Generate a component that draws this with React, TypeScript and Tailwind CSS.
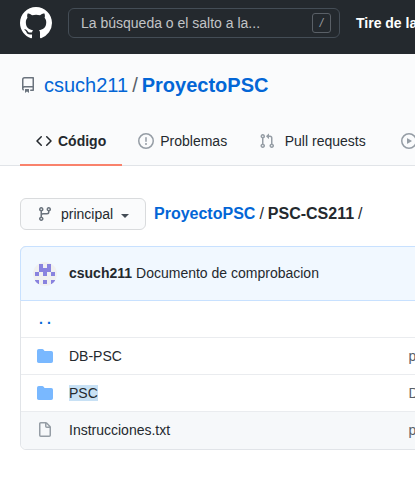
import type { ReactNode } from "react";

function Octicon({ d, className = "", size = 16 }: { d: string; className?: string; size?: number }) {
  return (
    <svg viewBox="0 0 16 16" width={size} height={size} className={`shrink-0 fill-current ${className}`} aria-hidden="true">
      <path fillRule="evenodd" d={d} />
    </svg>
  );
}

const icons = {
  mark: "M8 0C3.58 0 0 3.58 0 8c0 3.54 2.29 6.53 5.47 7.59.4.07.55-.17.55-.38 0-.19-.01-.82-.01-1.49-2.01.37-2.53-.49-2.69-.94-.09-.23-.48-.94-.82-1.13-.28-.15-.68-.52-.01-.53.63-.01 1.08.58 1.23.82.72 1.21 1.87.87 2.33.66.07-.52.28-.87.51-1.07-1.78-.2-3.64-.89-3.64-3.95 0-.87.31-1.59.82-2.15-.08-.2-.36-1.02.08-2.12 0 0 .67-.21 2.2.82.64-.18 1.32-.27 2-.27.68 0 1.36.09 2 .27 1.53-1.04 2.2-.82 2.2-.82.44 1.1.16 1.92.08 2.12.51.56.82 1.27.82 2.15 0 3.07-1.87 3.75-3.65 3.95.29.25.54.73.54 1.48 0 1.07-.01 1.93-.01 2.2 0 .21.15.46.55.38A8.013 8.013 0 0016 8c0-4.42-3.58-8-8-8z",
  repo: "M2 2.5A2.5 2.5 0 014.5 0h8.75a.75.75 0 01.75.75v12.5a.75.75 0 01-.75.75h-2.5a.75.75 0 110-1.5h1.75v-2h-8a1 1 0 00-.714 1.7.75.75 0 01-1.072 1.05A2.495 2.495 0 012 11.5v-9zm10.5-1V9h-8c-.356 0-.694.074-1 .208V2.5a1 1 0 011-1h8zM5 12.25v3.25a.25.25 0 00.4.2l1.45-1.087a.25.25 0 01.3 0L8.6 15.7a.25.25 0 00.4-.2v-3.25a.25.25 0 00-.25-.25h-3.5a.25.25 0 00-.25.25z",
  code: "M4.72 3.22a.75.75 0 011.06 1.06L2.06 8l3.72 3.72a.75.75 0 11-1.06 1.06L.47 8.53a.75.75 0 010-1.06l4.25-4.25zm6.56 0a.75.75 0 10-1.06 1.06L13.94 8l-3.72 3.72a.75.75 0 101.06 1.06l4.25-4.25a.75.75 0 000-1.06l-4.25-4.25z",
  issue: "M8 1.5a6.5 6.5 0 100 13 6.5 6.5 0 000-13zM0 8a8 8 0 1116 0A8 8 0 010 8zm9 3a1 1 0 11-2 0 1 1 0 012 0zm-.25-6.25a.75.75 0 00-1.5 0v3.5a.75.75 0 001.5 0v-3.5z",
  pull: "M7.177 3.073L9.573.677A.25.25 0 0110 .854v4.792a.25.25 0 01-.427.177L7.177 3.427a.25.25 0 010-.354zM3.75 2.5a.75.75 0 100 1.5.75.75 0 000-1.5zm-2.25.75a2.25 2.25 0 113 2.122v5.256a2.251 2.251 0 11-1.5 0V5.372A2.25 2.25 0 011.5 3.25zM11 2.5h-1V4h1a1 1 0 011 1v5.628a2.251 2.251 0 101.5 0V5A2.5 2.5 0 0011 2.5zm1 10.25a.75.75 0 111.5 0 .75.75 0 01-1.5 0zM3.75 12a.75.75 0 100 1.5.75.75 0 000-1.5z",
  play: "M1.5 8a6.5 6.5 0 1113 0 6.5 6.5 0 01-13 0zM8 0a8 8 0 100 16A8 8 0 008 0zM6.379 5.227A.25.25 0 006 5.442v5.117a.25.25 0 00.379.214l4.264-2.559a.25.25 0 000-.428L6.379 5.227z",
  branch: "M11.75 2.5a.75.75 0 100 1.5.75.75 0 000-1.5zm-2.25.75a2.25 2.25 0 113 2.122V6A2.5 2.5 0 0110 8.5H6a1 1 0 00-1 1v1.128a2.251 2.251 0 11-1.5 0V5.372a2.25 2.25 0 111.5 0v1.836A2.492 2.492 0 016 7h4a1 1 0 001-1v-.628A2.25 2.25 0 019.5 3.25zM4.25 12a.75.75 0 100 1.5.75.75 0 000-1.5zM3.5 3.25a.75.75 0 111.5 0 .75.75 0 01-1.5 0z",
  folder: "M1.75 1A1.75 1.75 0 000 2.75v10.5C0 14.216.784 15 1.75 15h12.5A1.75 1.75 0 0016 13.25v-8.5A1.75 1.75 0 0014.25 3h-6.5a.25.25 0 01-.2-.1l-.9-1.2c-.33-.44-.85-.7-1.4-.7h-3.5z",
  file: "M3.75 1.5a.25.25 0 00-.25.25v11.5c0 .138.112.25.25.25h8.5a.25.25 0 00.25-.25V6H9.75A1.75 1.75 0 018 4.25V1.5H3.75zm5.75.56v2.19c0 .138.112.25.25.25h2.19L9.5 2.06zM2 1.75C2 .784 2.784 0 3.75 0h5.086c.464 0 .909.184 1.237.513l3.414 3.414c.329.328.513.773.513 1.237v8.086A1.75 1.75 0 0112.25 15h-8.5A1.75 1.75 0 012 13.25V1.75z",
};

function Header() {
  return (
    <header className="flex h-[54px] items-start bg-[#24292e] pl-5">
      <Octicon d={icons.mark} size={32} className="mt-[7px] text-white" />
      <div className="mt-2 ml-4 flex h-[30px] w-[272px] shrink-0 items-center justify-between rounded-md border border-[#444d56] pr-2 pl-3 text-[#c2c4c6]">
        <span>La búsqueda o el salto a la...</span>
        <span className="flex h-5 w-[19px] items-center justify-center rounded-[3px] border border-[#5a6067] text-xs text-[#9a9da0] italic">/</span>
      </div>
      <span className="mt-2 ml-4 leading-[30px] font-bold whitespace-nowrap text-white">Tire de las</span>
    </header>
  );
}

function RepoHead() {
  return (
    <div className="h-28 border-b border-[#e1e4e8] bg-[#fafbfc]">
      <h1 className="flex h-[62px] items-center pl-5 text-xl text-[#586069]">
        <Octicon d={icons.repo} className="mr-2 text-[#6a737d]" />
        <span className="text-[#0366d6]">csuch211</span>
        <span className="mx-1">/</span>
        <span className="font-bold text-[#0366d6]">ProyectoPSC</span>
      </h1>
      <nav className="flex h-[50px] pl-5 text-[#24292e]">
        <a className="flex shrink-0 items-center gap-1.5 border-b-2 border-[#f9826c] px-4 pt-0.5 font-bold">
          <Octicon d={icons.code} />
          Código
        </a>
        <a className="flex shrink-0 items-center gap-1.5 border-b-2 border-transparent px-4 pt-0.5">
          <Octicon d={icons.issue} className="text-[#959da5]" />
          Problemas
        </a>
        <a className="flex shrink-0 items-center gap-[9.6px] border-b-2 border-transparent px-4 pt-0.5">
          <Octicon d={icons.pull} className="text-[#959da5]" />
          Pull requests
        </a>
        <a className="flex shrink-0 items-center border-b-2 border-transparent pt-0.5 pl-[19.4px]">
          <Octicon d={icons.play} className="text-[#959da5]" />
        </a>
      </nav>
    </div>
  );
}

const identicon = [
  [6, 2], [14, 2],
  [6, 6], [10, 6], [14, 6],
  [2, 10], [10, 10], [18, 10],
  [2, 18], [10, 18], [18, 18],
];

function Avatar() {
  return (
    <svg viewBox="0 0 24 24" width="24" height="24" className="mt-0.5 shrink-0 rounded-full">
      <rect width="24" height="24" fill="#f0f0f0" />
      {identicon.map(([x, y]) => (
        <rect key={`${x}-${y}`} x={x} y={y} width="4" height="4" fill="#8983df" />
      ))}
    </svg>
  );
}

function Row({ icon, name, message, last = false }: { icon: ReactNode; name: ReactNode; message: string; last?: boolean }) {
  return (
    <div className={`flex items-center border-t border-[#eaecef] pl-4 ${last ? "h-[38px] rounded-b-md bg-[#f6f8fa] pb-px" : "h-[37px]"}`}>
      {icon}
      <span className="ml-4 w-[339.5px] shrink-0 text-[#24292e]">{name}</span>
      <span className="shrink-0 text-[#586069]">{message}</span>
    </div>
  );
}

export default function App() {
  return (
    <div className="h-[481px] w-full overflow-hidden bg-white font-['Liberation_Sans',Arial,sans-serif] text-sm text-[#24292e]">
      <Header />
      <RepoHead />
      <div className="flex items-center pt-8 pl-5">
        <button className="flex h-8 w-[126px] shrink-0 items-center rounded-md border border-[#d9dbdd] bg-[#fafbfc] pl-4">
          <Octicon d={icons.branch} className="text-[#6a737d]" />
          <span className="ml-2">principal</span>
          <span className="mt-[3px] ml-2 border-x-4 border-t-4 border-x-transparent border-t-[#444d56]" />
        </button>
        <div className="ml-2 text-base leading-6 whitespace-nowrap">
          <b className="text-[#0366d6]">ProyectoPSC</b>
          <span className="mx-1">/</span>
          <b>PSC-CS211</b>
          <span className="mx-1">/</span>
        </div>
      </div>
      <section className="mt-4 ml-5 w-[600px] rounded-md border border-[#e1e4e8]">
        <div className="-mx-px -mt-px flex h-[55px] items-center rounded-t-md border border-[#c8e1ff] bg-[#f1f8ff] pb-px pl-3">
          <Avatar />
          <b className="ml-3">csuch211</b>
          <span className="ml-1">Documento de comprobacion</span>
        </div>
        <div className="h-9 pl-[18px] leading-9 font-bold tracking-[4px] text-[#0366d6]">..</div>
        <Row icon={<Octicon d={icons.folder} className="text-[#79b8ff]" />} name="DB-PSC" message="primer commit" />
        <Row
          icon={<Octicon d={icons.folder} className="text-[#79b8ff]" />}
          name={<span className="bg-[#c8e1f5]">PSC</span>}
          message="Documento de comprobacion"
        />
        <Row icon={<Octicon d={icons.file} className="text-[#959da5]" />} name="Instrucciones.txt" message="primer commit" last />
      </section>
    </div>
  );
}
